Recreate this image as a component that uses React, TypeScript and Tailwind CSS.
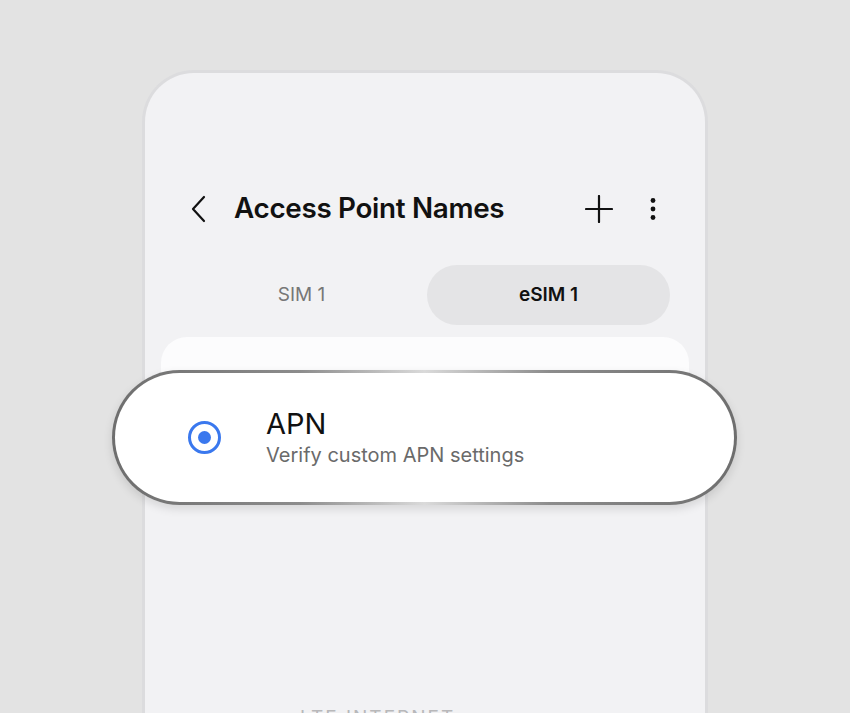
import React from 'react';

function BackIcon() {
  return (
    <svg width="16" height="28" viewBox="0 0 16 28" fill="none">
      <path d="M14 2 L3 14 L14 26" stroke="#111" strokeWidth="2.2" strokeLinecap="round" strokeLinejoin="round" />
    </svg>
  );
}

function PlusIcon() {
  return (
    <svg width="28" height="28" viewBox="0 0 28 28" fill="none">
      <path d="M14 1 V27 M1 14 H27" stroke="#111" strokeWidth="2.2" strokeLinecap="round" />
    </svg>
  );
}

function MoreIcon() {
  return (
    <svg width="8" height="24" viewBox="0 0 8 24" fill="#111">
      <circle cx="4" cy="3.5" r="2.4" />
      <circle cx="4" cy="12" r="2.4" />
      <circle cx="4" cy="20.5" r="2.4" />
    </svg>
  );
}

export default function App() {
  return (
    <div
      className="relative w-[850px] h-[713px] overflow-hidden bg-[#e3e3e3] pt-[70px]"
      style={{ fontFamily: 'Inter, Roboto, "Noto Sans", sans-serif' }}
    >
      {/* Phone frame */}
      <div className="ml-[142px] w-[566px] h-[700px] rounded-t-[52px] border-[3px] border-b-0 border-[#dcdcde] bg-[#f2f2f4] flex flex-col">
        {/* Header */}
        <div className="mt-[108px] h-[56px] flex items-center pl-[45px] pr-[48px]">
          <BackIcon />
          <h1 className="ml-[28px] text-[27.8px] font-semibold tracking-[-0.3px] text-[#111]">Access Point Names</h1>
          <div className="ml-auto flex items-center gap-[36px]">
            <PlusIcon />
            <MoreIcon />
          </div>
        </div>

        {/* Tabs */}
        <div className="mt-[28px] mx-[35px] h-[60px] grid grid-cols-2 gap-[4px]">
          <div className="flex items-center justify-center text-[19px] text-[#777]">SIM 1</div>
          <div className="flex items-center justify-center rounded-full bg-[#e4e4e6] text-[19px] font-semibold text-[#111]">eSIM 1</div>
        </div>

        {/* Card under highlight */}
        <div className="mt-[12px] mx-[16px] h-[150px] rounded-[26px] bg-[#fcfcfd]" />

        <div className="mt-[217px] pl-[155px] text-[19px] text-[#b8b8ba] tracking-[2px]">LTE INTERNET</div>
      </div>

      {/* Highlighted APN row */}
      <div className="absolute left-[112px] top-[370px] w-[625px] h-[135px] rounded-full p-[3px] bg-[linear-gradient(90deg,#6e6e6e,#8c8c8c_30%,#dadada_50%,#8c8c8c_70%,#6e6e6e)] shadow-[0_4px_10px_rgba(0,0,0,0.12)]">
        <div className="w-full h-full rounded-full bg-white flex items-center">
          <div className="ml-[73px] w-[33px] h-[33px] rounded-full border-[3.5px] border-[#3a78ee] flex items-center justify-center">
            <div className="w-[13px] h-[13px] rounded-full bg-[#3a78ee]" />
          </div>
          <div className="ml-[45px] flex flex-col -mt-[2px]">
            <span className="text-[29px] leading-[36px] text-[#111]">APN</span>
            <span className="text-[20px] leading-[26px] text-[#6a6a6a]">Verify custom APN settings</span>
          </div>
        </div>
      </div>
    </div>
  );
}
